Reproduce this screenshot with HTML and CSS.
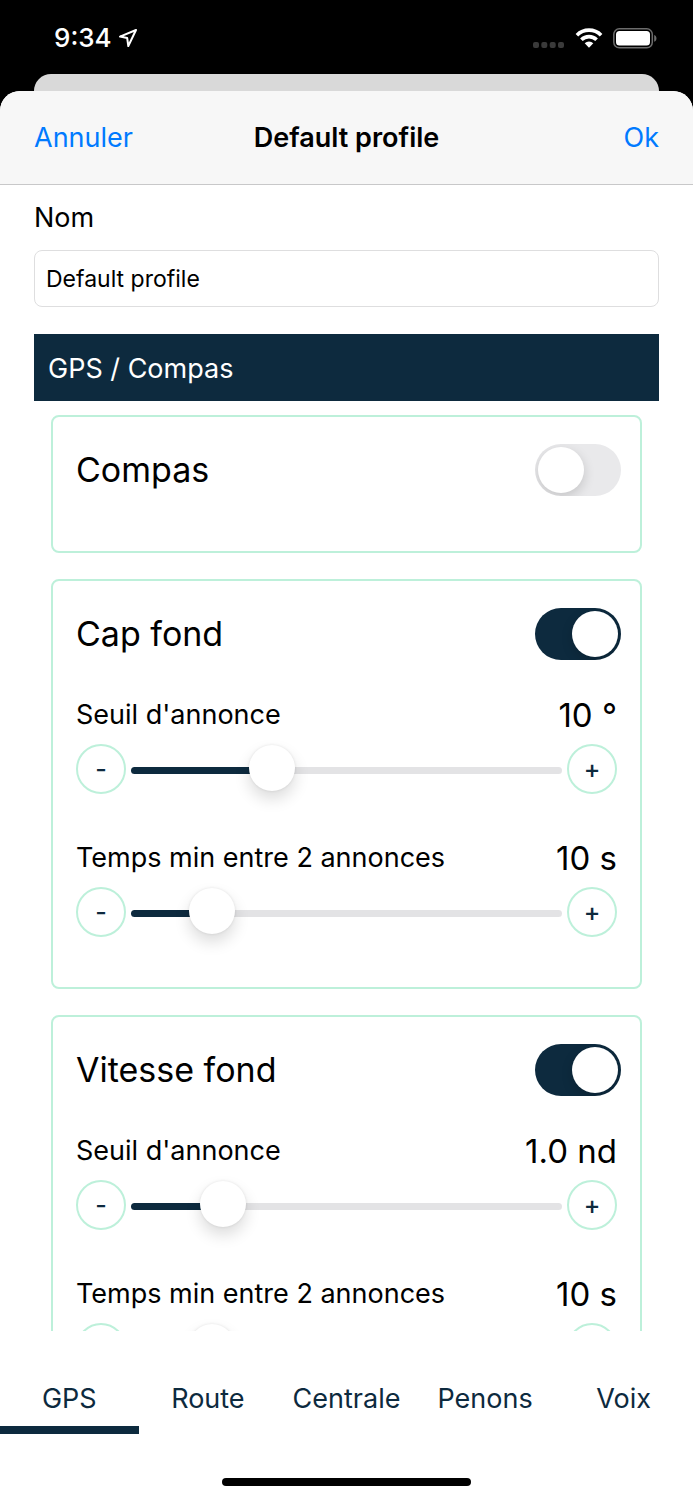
FILE: index.html
```html
<!DOCTYPE html>
<html lang="fr">
<head>
<meta charset="utf-8">
<meta name="viewport" content="width=device-width, initial-scale=1">
<title>Default profile</title>
<link rel="stylesheet" href="styles.css">
</head>
<body>
<div class="screen">
  <div class="status-bar">
    <div class="status-left">
      <span class="time">9:34</span>
      <svg width="20" height="20" viewBox="0 0 20 20" fill="none" stroke="#fff" stroke-width="2" stroke-linejoin="round"><path d="M18 2 2 8.600l7.200 1.500L10.300 18z"/></svg>
    </div>
    <div class="status-right">
      <svg width="32" height="20" viewBox="0 0 32 20" fill="#3a3a3a"><rect x="0" y="14" width="6" height="6" rx="2"/><rect x="8.300" y="14" width="6" height="6" rx="2"/><rect x="16.700" y="14" width="6" height="6" rx="2"/><rect x="25" y="14" width="6" height="6" rx="2"/></svg>
      <svg width="28" height="20" viewBox="0 0 28 20" fill="none" stroke="#fff" stroke-width="3.700"><path d="M1.900 7.200a17.200 17.200 0 0 1 24.200 0"/><path d="M6.400 11.800a10.800 10.800 0 0 1 15.200 0"/><path d="M9.700 15.300a6.200 6.200 0 0 1 8.600 0L14 19.800z" fill="#fff" stroke="none"/></svg>
      <svg width="44" height="21" viewBox="0 0 44 21"><rect x="0.800" y="0.800" width="38.500" height="19" rx="5.500" fill="none" stroke="#6c6c6c" stroke-width="1.500"/><rect x="3" y="3" width="34" height="14.600" rx="3.500" fill="#fff"/><path d="M41.200 7c3 1 3 5.800 0 6.800z" fill="#6c6c6c"/></svg>
    </div>
  </div>
  <div class="sheet-behind"></div>
  <main class="sheet">
    <header class="nav-bar">
      <button type="button" class="nav-button">Annuler</button>
      <h1 class="nav-title">Default profile</h1>
      <button type="button" class="nav-button nav-ok">Ok</button>
    </header>
    <div class="content">
      <label class="name-label" for="name">Nom</label>
      <input class="name-input" id="name" type="text" value="Default profile">
      <h2 class="section-title">GPS / Compas</h2>
      <div class="cards">
        <section class="card">
          <div class="card-head">
            <label for="compas">Compas</label>
            <input class="switch" id="compas" type="checkbox" role="switch">
          </div>
        </section>
        <section class="card">
          <div class="card-head">
            <label for="cap">Cap fond</label>
            <input class="switch" id="cap" type="checkbox" role="switch" checked>
          </div>
          <div class="settings">
            <div class="setting">
              <div class="setting-head"><label for="cap-seuil">Seuil d'annonce</label><output class="value" for="cap-seuil">10 °</output></div>
              <div class="stepper">
                <button type="button" class="step" aria-label="Diminuer">-</button>
                <input class="slider" id="cap-seuil" type="range" min="0" max="1000" value="306" style="--fill: 30.6%">
                <button type="button" class="step" aria-label="Augmenter">+</button>
              </div>
            </div>
            <div class="setting">
              <div class="setting-head"><label for="cap-temps">Temps min entre 2 annonces</label><output class="value" for="cap-temps">10 s</output></div>
              <div class="stepper">
                <button type="button" class="step" aria-label="Diminuer">-</button>
                <input class="slider" id="cap-temps" type="range" min="0" max="1000" value="151" style="--fill: 15.1%">
                <button type="button" class="step" aria-label="Augmenter">+</button>
              </div>
            </div>
          </div>
        </section>
        <section class="card">
          <div class="card-head">
            <label for="vitesse">Vitesse fond</label>
            <input class="switch" id="vitesse" type="checkbox" role="switch" checked>
          </div>
          <div class="settings">
            <div class="setting">
              <div class="setting-head"><label for="vitesse-seuil">Seuil d'annonce</label><output class="value" for="vitesse-seuil">1.0 nd</output></div>
              <div class="stepper">
                <button type="button" class="step" aria-label="Diminuer">-</button>
                <input class="slider" id="vitesse-seuil" type="range" min="0" max="1000" value="180" style="--fill: 18%">
                <button type="button" class="step" aria-label="Augmenter">+</button>
              </div>
            </div>
            <div class="setting">
              <div class="setting-head"><label for="vitesse-temps">Temps min entre 2 annonces</label><output class="value" for="vitesse-temps">10 s</output></div>
              <div class="stepper">
                <button type="button" class="step" aria-label="Diminuer">-</button>
                <input class="slider" id="vitesse-temps" type="range" min="0" max="1000" value="151" style="--fill: 15.1%">
                <button type="button" class="step" aria-label="Augmenter">+</button>
              </div>
            </div>
          </div>
        </section>
      </div>
    </div>
    <nav class="tabs">
      <a class="tab active" href="#gps" aria-current="page">GPS</a>
      <a class="tab" href="#route">Route</a>
      <a class="tab" href="#centrale">Centrale</a>
      <a class="tab" href="#penons">Penons</a>
      <a class="tab" href="#voix">Voix</a>
    </nav>
    <div class="home-indicator"></div>
  </main>
</div>
</body>
</html>
```
FILE: styles.css
```css
:root {
  --navy: #0d2a3e;
  --mint: #bdf0da;
  --blue: #007aff;
  --grey: #e3e3e5;
}

* {
  box-sizing: border-box;
}

body {
  margin: 0;
  background: #000;
  color: #000;
  font: 27px/34px Inter, "Liberation Sans", sans-serif;
}

button,
input {
  font: inherit;
  margin: 0;
}

.screen {
  display: flex;
  flex-direction: column;
  height: 100vh;
}

.status-bar {
  display: flex;
  justify-content: space-between;
  align-items: center;
  flex: none;
  height: 74px;
  padding: 2px 36px 0 54px;
  color: #fff;
}

.status-left,
.status-right {
  display: flex;
  align-items: center;
  gap: 6px;
}

.status-right {
  gap: 10px;
}

.time {
  font-size: 26px;
  font-weight: 500;
}

.sheet-behind {
  flex: none;
  height: 17px;
  margin: 0 34px;
  border-radius: 17px 17px 0 0;
  background: #d9d9d9;
}

.sheet {
  display: flex;
  flex-direction: column;
  flex: 1;
  min-height: 0;
  overflow: hidden;
  border-radius: 20px 20px 0 0;
  background: #fff;
}

.nav-bar {
  display: grid;
  grid-template-columns: 1fr auto 1fr;
  align-items: center;
  flex: none;
  height: 94px;
  padding: 0 34px;
  border-bottom: 1px solid #c8c8c9;
  background: #f7f7f7;
}

.nav-button {
  justify-self: start;
  padding: 0;
  border: 0;
  background: none;
  color: var(--blue);
}

.nav-ok {
  justify-self: end;
}

.nav-title {
  margin: 0;
  font-size: 27px;
  font-weight: 600;
}

.content {
  flex: 1;
  min-height: 0;
  overflow: hidden;
  padding: 16px 34px 0;
}

.name-label {
  display: block;
}

.name-input {
  display: block;
  width: 100%;
  height: 57px;
  margin: 15px 0 27px;
  padding: 0 11px;
  border: 1px solid #dededf;
  border-radius: 8px;
  background: #fff;
  color: #000;
  font-size: 23px;
}

.section-title {
  margin: 0;
  padding: 18px 14px 15px;
  background: var(--navy);
  color: #fff;
  font-size: 27px;
  font-weight: 400;
}

.cards {
  display: flex;
  flex-direction: column;
  gap: 26px;
  padding: 14px 17px;
}

.card {
  padding: 27px 23px 21px;
  border: 2px solid var(--mint);
  border-radius: 8px;
}

.card-head {
  display: flex;
  justify-content: space-between;
  align-items: center;
  height: 52px;
  margin: 0 -4px 34px 0;
  font-size: 34px;
}

.switch {
  appearance: none;
  overflow: hidden;
  width: 86px;
  height: 52px;
  padding: 3px;
  border-radius: 26px;
  background: #e9e9eb;
}

.switch::before {
  content: "";
  display: block;
  width: 46px;
  height: 46px;
  border-radius: 50%;
  background: #fff;
  box-shadow: 0 4px 12px rgba(0, 0, 0, 0.16);
}

.switch:checked {
  background: var(--navy);
}

.switch:checked::before {
  margin-left: auto;
}

.settings {
  display: flex;
  flex-direction: column;
  gap: 14px;
}

.setting {
  padding-bottom: 29px;
}

.setting-head {
  display: flex;
  justify-content: space-between;
  align-items: center;
  height: 42px;
  margin-bottom: 8px;
}

.value {
  font-size: 33px;
}

.stepper {
  display: flex;
  align-items: center;
  gap: 5px;
}

.step {
  flex: none;
  width: 50px;
  height: 50px;
  padding: 0;
  border: 2px solid var(--mint);
  border-radius: 50%;
  background: #fff;
  color: var(--navy);
  font-size: 25px;
  font-weight: 500;
  line-height: 30px;
}

.slider {
  appearance: none;
  flex: 1;
  min-width: 0;
  height: 50px;
  padding-top: 3px;
  background: none;
}

.slider::-webkit-slider-runnable-track {
  height: 7px;
  border-radius: 4px;
  background: linear-gradient(to right, var(--navy) var(--fill), var(--grey) var(--fill));
}

.slider::-webkit-slider-thumb {
  appearance: none;
  width: 46px;
  height: 46px;
  margin-top: -22px;
  border-radius: 50%;
  background: #fff;
  box-shadow: 0 8px 16px rgba(0, 0, 0, 0.14), 0 0 3px rgba(0, 0, 0, 0.1);
}

.tabs {
  display: grid;
  grid-template-columns: repeat(5, 1fr);
  flex: none;
  padding-top: 40px;
}

.tab {
  padding: 11px 0 10px;
  border-bottom: 8px solid transparent;
  color: var(--navy);
  text-align: center;
  text-decoration: none;
}

.tab.active {
  border-bottom-color: var(--navy);
}

.home-indicator {
  flex: none;
  align-self: center;
  width: 36%;
  height: 8px;
  margin: 44px 0 14px;
  border-radius: 4px;
  background: #000;
}
```
